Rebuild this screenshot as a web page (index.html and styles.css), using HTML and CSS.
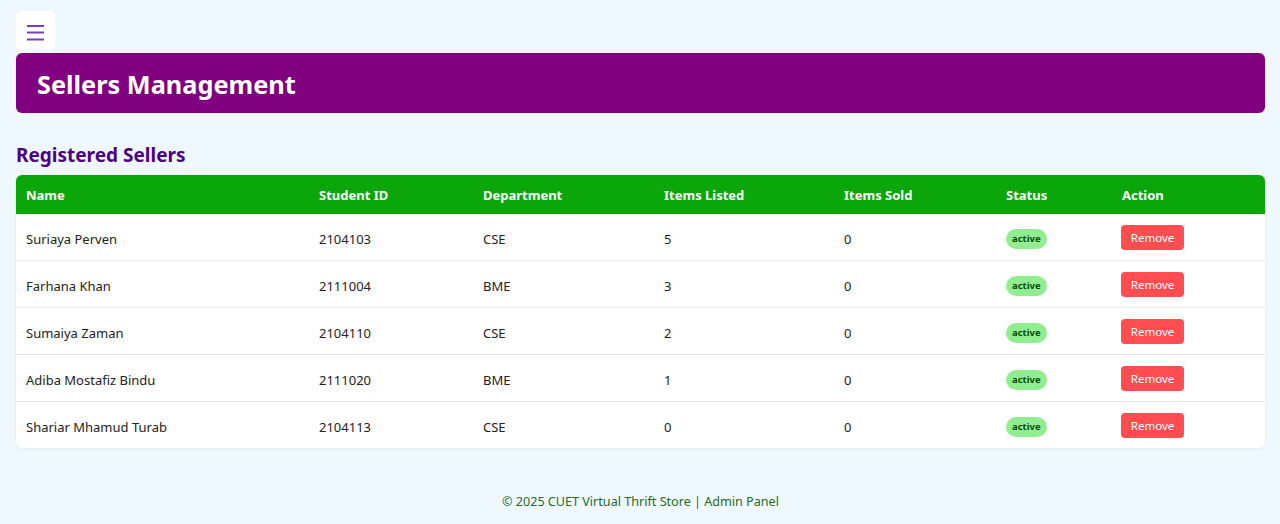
FILE: index.html
```html
<!DOCTYPE html>
<html lang="en">
<head>
<meta charset="utf-8">
<title>Sellers Management</title>
<link rel="stylesheet" href="styles.css">
</head>
<body>
<div class="page">
  <button class="menu-btn" aria-label="Menu">
    <svg width="17" height="16" viewBox="0 0 17 16" aria-hidden="true">
      <rect x="0" y="0" width="17" height="2" fill="#7a3cc0"/>
      <rect x="0" y="6.5" width="17" height="2" fill="#7a3cc0"/>
      <rect x="0" y="13.5" width="17" height="2" fill="#7a3cc0"/>
    </svg>
  </button>
  <header class="banner"><h1>Sellers Management</h1></header>
  <main class="content">
    <h2 class="section-title">Registered Sellers</h2>
    <table class="sellers">
      <thead>
        <tr>
          <th class="c-name">Name</th>
          <th class="c-id">Student ID</th>
          <th class="c-dept">Department</th>
          <th class="c-listed">Items Listed</th>
          <th class="c-sold">Items Sold</th>
          <th class="c-status">Status</th>
          <th class="c-action">Action</th>
        </tr>
      </thead>
      <tbody>
        <tr><td>Suriaya Perven</td><td>2104103</td><td>CSE</td><td>5</td><td>0</td><td><span class="badge">active</span></td><td><button class="remove">Remove</button></td></tr>
        <tr><td>Farhana Khan</td><td>2111004</td><td>BME</td><td>3</td><td>0</td><td><span class="badge">active</span></td><td><button class="remove">Remove</button></td></tr>
        <tr><td>Sumaiya Zaman</td><td>2104110</td><td>CSE</td><td>2</td><td>0</td><td><span class="badge">active</span></td><td><button class="remove">Remove</button></td></tr>
        <tr><td>Adiba Mostafiz Bindu</td><td>2111020</td><td>BME</td><td>1</td><td>0</td><td><span class="badge">active</span></td><td><button class="remove">Remove</button></td></tr>
        <tr><td>Shariar Mhamud Turab</td><td>2104113</td><td>CSE</td><td>0</td><td>0</td><td><span class="badge">active</span></td><td><button class="remove">Remove</button></td></tr>
      </tbody>
    </table>
  </main>
  <footer class="footer">&copy; 2025 CUET Virtual Thrift Store | Admin Panel</footer>
</div>
</body>
</html>
```
FILE: styles.css
```css
* { box-sizing: border-box; }
html, body { margin: 0; padding: 0; }
body {
  background: #f0f8ff;
  font-family: "Noto Sans", "Open Sans", sans-serif;
  color: #222;
}
.page {
  padding: 11px 15px 0 16px;
}
.menu-btn {
  display: flex;
  align-items: flex-start;
  justify-content: flex-start;
  width: 39px;
  height: 39px;
  border: none;
  border-radius: 5px;
  background: #ffffff;
  padding: 14px 0 0 11px;
}
.menu-btn svg { display: block; }
.banner {
  margin-top: 3px;
  background: #800080;
  border-radius: 6px;
  height: 60px;
  display: flex;
  align-items: center;
  padding: 2px 21px 0;
}
.banner h1 {
  margin: 0;
  color: #ffffff;
  font-size: 25.3px;
  font-weight: 700;
  letter-spacing: 0;
}
.content {
  padding-top: 30px;
}
.section-title {
  margin: 0 0 7px 0;
  color: #4b0082;
  font-size: 19px;
  font-weight: 700;
  line-height: 25px;
}
.sellers {
  width: 100%;
  border-collapse: separate;
  border-spacing: 0;
  background: #ffffff;
  border-radius: 6px;
  overflow: hidden;
  box-shadow: 0 1px 3px rgba(0,0,0,0.06);
  font-size: 13px;
}
.sellers th {
  background: #0aa60a;
  color: #ffffff;
  text-align: left;
  font-weight: 700;
  height: 39px;
  padding: 0 10px;
}
.sellers td {
  height: 47px;
  padding: 3px 10px 0;
  color: #222;
  border-bottom: 1px solid #e6e6e6;
}
.sellers tbody tr:last-child td { border-bottom: none; height: 46px; }
.c-name { width: 293px; }
.c-id { width: 164px; }
.c-dept { width: 181px; }
.c-listed { width: 180px; }
.c-sold { width: 162px; }
.c-status { width: 116px; }
.badge {
  display: inline-block;
  background: #90ee90;
  color: #0a4a0a;
  font-size: 9.5px;
  font-weight: 700;
  border-radius: 10px;
  padding: 3px 6px 4px;
  line-height: 13px;
  margin-top: 1px;
}
.remove {
  background: #ff4d52;
  color: #ffffff;
  border: none;
  border-radius: 4px;
  font-family: inherit;
  font-size: 11.5px;
  height: 25px;
  width: 63px;
  padding: 0;
  margin: -3px 0 0 -1px;
  vertical-align: middle;
}
.footer {
  text-align: center;
  color: #1f6b1f;
  font-size: 12.6px;
  padding-top: 45px;
  height: 77px;
}
```
